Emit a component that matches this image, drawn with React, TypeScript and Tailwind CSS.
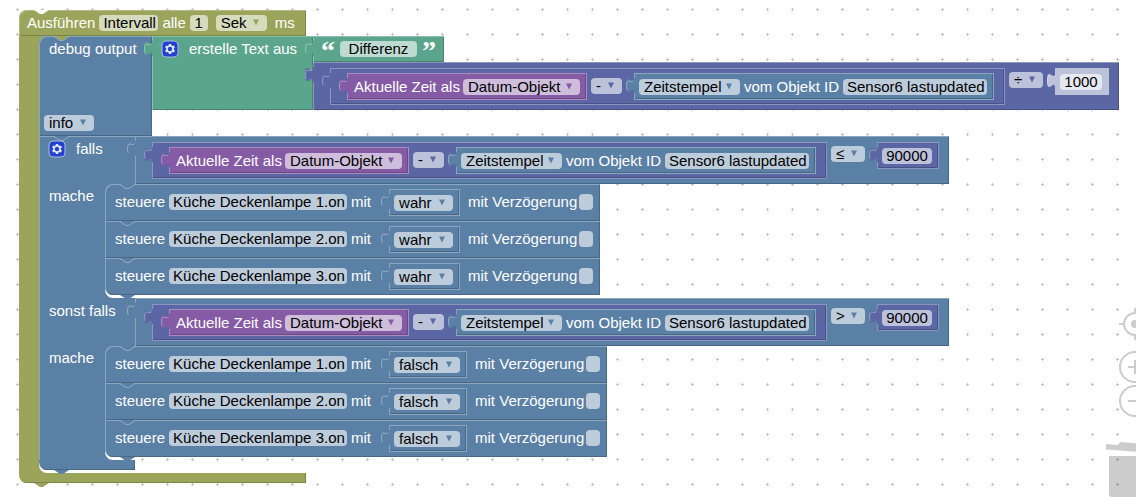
import React from 'react';
import { clsx } from 'clsx';

type Tone = 'olive' | 'blue' | 'green' | 'indigo' | 'purple' | 'shadow';

const tones: Record<Tone, { bg: string; ink: string; edge: string; ring: string }> = {
  olive: {
    bg: 'bg-[#9aa55b]',
    ink: 'text-[#9aa55b]',
    edge: 'shadow-[inset_1px_1px_0_#b4bc84,inset_-1px_-1px_0_#7b8449]',
    ring: '',
  },
  blue: {
    bg: 'bg-[#5b80a5]',
    ink: 'text-[#5b80a5]',
    edge: 'shadow-[inset_1px_1px_0_#8ca6c0,inset_-1px_-1px_0_#496684]',
    ring: 'shadow-[inset_0_0_0_1px_#8ca6c0,inset_-2px_-2px_0_#496684]',
  },
  green: {
    bg: 'bg-[#5ba58c]',
    ink: 'text-[#5ba58c]',
    edge: 'shadow-[inset_1px_1px_0_#8cc0ae,inset_-1px_-1px_0_#498470]',
    ring: '',
  },
  indigo: {
    bg: 'bg-[#5b67a5]',
    ink: 'text-[#5b67a5]',
    edge: 'shadow-[inset_1px_1px_0_#8c95c0,inset_-1px_-1px_0_#495284]',
    ring: 'shadow-[inset_0_0_0_1px_#8c95c0,inset_-2px_-2px_0_#495284]',
  },
  purple: {
    bg: 'bg-[#855ba5]',
    ink: 'text-[#855ba5]',
    edge: '',
    ring: 'shadow-[inset_0_0_0_1px_#a98cc0,inset_-2px_-2px_0_#6a4984]',
  },
  shadow: {
    bg: 'bg-[#bdc2db]',
    ink: 'text-[#bdc2db]',
    edge: '',
    ring: '',
  },
};

// Puzzle tab on the left side of a value block
const Plug = ({ tone }: { tone: Tone }) => (
  <svg
    className={clsx('absolute top-[5px] -left-2 overflow-visible', tones[tone].ink)}
    width="9"
    height="15"
    viewBox="0 0 9 15"
    aria-hidden="true"
  >
    <path d="M9 0H8c0 10-8-8-8 7.5S8 5 8 15h1z" fill="currentColor" />
    <path d="M7.5 2.5C6 6 .5-1 .5 7.5c0 3 .5 4 1 4.500" fill="none" stroke="#fff" strokeOpacity="0.35" />
  </svg>
);

const Notch = ({ className, line = true }: { className: string; line?: boolean }) => (
  <svg
    className={clsx('absolute left-[15px] z-10', className)}
    width="15"
    height="5"
    viewBox="0 0 15 5"
    aria-hidden="true"
  >
    <path d="M0 0l6 4h3l6-4z" fill="currentColor" />
    {line && <path d="M0 .5l6 4h3l6-4" fill="none" stroke="#fff" strokeOpacity="0.35" />}
  </svg>
);

const Gear = () => (
  <button type="button" aria-label="Mutator" className="block size-4 shrink-0">
    <svg width="16" height="16" viewBox="0 0 16 16" className="overflow-visible">
      <rect width="16" height="16" rx="4" fill="#2340d0" stroke="#a9bddb" />
      <path
        fill="#dfe6f5"
        d="m4.203,7.296 0,1.368 -0.92,0.677 -0.11,0.41 0.9,1.559 0.41,0.11 1.043,-0.457 1.187,0.683 0.127,1.134 0.3,0.3 1.8,0 0.3,-0.299 0.127,-1.138 1.185,-0.682 1.046,0.458 0.409,-0.11 0.9,-1.559 -0.11,-0.41 -0.92,-0.677 0,-1.366 0.92,-0.677 0.11,-0.41 -0.9,-1.559 -0.409,-0.109 -1.046,0.458 -1.185,-0.682 -0.127,-1.138 -0.3,-0.299 -1.8,0 -0.3,0.3 -0.126,1.135 -1.187,0.682 -1.043,-0.457 -0.41,0.11 -0.899,1.559 0.108,0.409z"
      />
      <circle cx="8" cy="8" r="2.2" fill="#2340d0" />
    </svg>
  </button>
);

const Label = ({ children }: { children: React.ReactNode }) => (
  <span className="whitespace-nowrap text-white">{children}</span>
);

const Field = ({ value, label, width, className }: { value: string; label: string; width: string; className?: string }) => (
  <input
    type="text"
    aria-label={label}
    defaultValue={value}
    className={clsx('h-4 shrink-0 rounded bg-white/60 text-black outline-none', width, className ?? 'pl-1')}
  />
);

const Dropdown = ({ options, label, width, tone }: { options: string[]; label: string; width: string; tone: Tone }) => (
  <span className={clsx('relative block h-4 shrink-0', width)}>
    <select
      aria-label={label}
      className="block h-4 w-full appearance-none rounded bg-white/60 pl-[5px] text-black outline-none"
    >
      {options.map((o) => (
        <option key={o}>{o}</option>
      ))}
    </select>
    <svg
      className={clsx('pointer-events-none absolute top-1 right-2', tones[tone].ink)}
      width="6"
      height="7"
      viewBox="0 0 6 7"
      aria-hidden="true"
    >
      <path d="M0 .5h6L3 6.500z" fill="currentColor" />
    </svg>
  </span>
);

// Small value block sitting inside a parent row
const Inset = ({ tone, className, children }: { tone: Tone; className?: string; children: React.ReactNode }) => (
  <div
    className={clsx('relative flex h-[27px] shrink-0 items-start pt-1.5', tones[tone].bg, tones[tone].ring, className)}
  >
    <Plug tone={tone} />
    {children}
  </div>
);

const TimeDifference = () => (
  <div
    className={clsx(
      'relative flex h-[37px] w-[675px] shrink-0 items-start gap-1 pt-[5px] pl-[17px]',
      tones.indigo.bg,
      tones.indigo.ring
    )}
  >
    <Plug tone="indigo" />
    <Inset tone="purple" className="w-60 justify-between pr-[7px] pl-[7px]">
      <Label>Aktuelle Zeit als</Label>
      <Dropdown tone="purple" label="Zeitformat" width="w-[117px]" options={['Datum-Objekt', 'Millisekunden']} />
    </Inset>
    <div className="pt-[5px]">
      <Dropdown tone="indigo" label="Rechenart" width="w-[31px]" options={['-', '+', '×', '÷']} />
    </div>
    <Inset tone="blue" className="ml-2 w-[360px] justify-between pr-[7px] pl-[5px]">
      <Dropdown tone="blue" label="Attribut" width="w-[101px]" options={['Zeitstempel', 'Wert']} />
      <Label>vom Objekt ID</Label>
      <Field label="Objekt ID" value="Sensor6 lastupdated" width="w-36" />
    </Inset>
  </div>
);

interface CalculationProps {
  tone: Tone;
  operators: string[];
  numberTone: Tone;
  value: string;
  fieldWidth: string;
}

const Calculation = ({ tone, operators, numberTone, value, fieldWidth }: CalculationProps) => (
  <div className={clsx('relative flex h-12 shrink-0 items-start gap-1 pt-1.5 pr-2.5 pl-[17px]', tones[tone].bg, tones[tone].edge)}>
    <Plug tone={tone} />
    <TimeDifference />
    <div className="pt-1">
      <Dropdown tone={tone} label="Operator" width="w-[34px]" options={operators} />
    </div>
    <Inset tone={numberTone} className="ml-2 pr-[7px] pl-[5px]">
      <Field label="Zahl" value={value} width={fieldWidth} className="text-center" />
    </Inset>
  </div>
);

const Control = ({ target, state, last }: { target: string; state: 'wahr' | 'falsch'; last: boolean }) => (
  <div
    className={clsx(
      'relative flex h-[37px] items-start gap-1 pt-[5px] pr-[7px] pl-2.5 first-of-type:rounded-tl-lg',
      tones.blue.bg,
      tones.blue.edge,
      last && 'rounded-bl-lg'
    )}
  >
    <Notch className="top-0 text-[#5b80a5]" />
    <div className="flex gap-1 pt-[5px]">
      <Label>steuere</Label>
      <Field label="Objekt" value={target} width="w-[178px]" />
      <Label>mit</Label>
    </div>
    <Inset tone="blue" className="ml-3.5 pr-[7px] pl-[5px]">
      <Dropdown
        tone="blue"
        label="Zustand"
        width={state === 'wahr' ? 'w-[59px]' : 'w-[66px]'}
        options={state === 'wahr' ? ['wahr', 'falsch'] : ['falsch', 'wahr']}
      />
    </Inset>
    <label className="ml-1 flex gap-0.5 pt-[5px]">
      <Label>mit Verzögerung</Label>
      <input type="checkbox" className="h-4 w-3.5 appearance-none rounded bg-white/60" />
    </label>
    {last && <Notch line={false} className="top-full text-[#5b80a5]" />}
  </div>
);

const lamps = ['Küche Deckenlampe 1.on', 'Küche Deckenlampe 2.on', 'Küche Deckenlampe 3.on'];

const Branch = ({ state }: { state: 'wahr' | 'falsch' }) => (
  <div className="flex">
    <div className="w-[74px] bg-[#5b80a5] pt-1 pl-2.5 shadow-[inset_1px_0_0_#8ca6c0]">
      <Label>mache</Label>
    </div>
    <div className="relative -ml-2 pb-[3px]">
      <span className="absolute bottom-0 left-0 h-3 w-8 rounded-bl-lg bg-white" />
      <div>
        {lamps.map((lamp, i) => (
          <Control key={lamp} target={lamp} state={state} last={i === lamps.length - 1} />
        ))}
      </div>
    </div>
  </div>
);

const DebugBlock = () => (
  <div className="relative flex items-start">
    <Notch className="top-0 text-[#9aa55b]" />
    <div className={clsx('flex h-[100px] w-[113px] flex-col justify-between rounded-tl-lg py-[5px]', tones.blue.bg, tones.blue.edge)}>
      <div className="pl-2.5">
        <Label>debug output</Label>
      </div>
      <div className="pl-[5px]">
        <Dropdown tone="blue" label="Stufe" width="w-[50px]" options={['info', 'debug', 'warn', 'error']} />
      </div>
    </div>
    <div className="relative flex">
      <Plug tone="green" />
      <div className={clsx('flex w-[161px] items-start gap-[11px] pt-[5px] pl-2.5', tones.green.bg, tones.green.edge)}>
        <Gear />
        <Label>erstelle Text aus</Label>
      </div>
      <div className="flex flex-col items-start">
        <div className={clsx('relative flex h-[26px] items-start gap-[5px] px-2 pt-[5px]', tones.green.bg, tones.green.edge)}>
          <Plug tone="green" />
          <span className="h-4 font-['Liberation_Serif',serif] text-[28px] leading-5 font-bold text-white">“</span>
          <Field label="Text" value="Differenz" width="w-[77px]" className="text-center" />
          <span className="h-4 font-['Liberation_Serif',serif] text-[28px] leading-5 font-bold text-white">”</span>
        </div>
        <Calculation tone="indigo" operators={['÷', '×', '+', '-']} numberTone="shadow" value="1000" fieldWidth="w-[42px]" />
      </div>
    </div>
  </div>
);

const IfBlock = () => (
  <div className="relative">
    <Notch className="top-0 text-[#5b80a5]" />
    <div className="flex">
      <div className="flex w-24 items-start gap-[11px] bg-[#5b80a5] pt-[5px] pl-2.5 shadow-[inset_1px_1px_0_#8ca6c0]">
        <Gear />
        <Label>falls</Label>
      </div>
      <Calculation tone="blue" operators={['≤', '<', '=', '>']} numberTone="indigo" value="90000" fieldWidth="w-[50px]" />
    </div>
    <Branch state="wahr" />
    <div className="flex">
      <div className="w-24 bg-[#5b80a5] pt-[5px] pl-2.5 shadow-[inset_1px_0_0_#8ca6c0]">
        <Label>sonst falls</Label>
      </div>
      <Calculation tone="blue" operators={['>', '≥', '=', '<']} numberTone="indigo" value="90000" fieldWidth="w-[50px]" />
    </div>
    <Branch state="falsch" />
    <div className="relative h-2.5 w-24 rounded-bl-lg bg-[#5b80a5] shadow-[inset_-1px_-1px_0_#496684]">
      <Notch line={false} className="top-full text-[#5b80a5]" />
    </div>
  </div>
);

const IntervalBlock = () => (
  <div className="relative w-max">
    <Notch className="top-0 text-white" line={false} />
    <div className={clsx('flex h-[26px] w-[287px] items-start gap-1 rounded-tl-lg pt-[5px] pl-2', tones.olive.bg, tones.olive.edge)}>
      <Label>Ausführen</Label>
      <Field label="Name" value="Intervall" width="w-[59px]" />
      <Label>alle</Label>
      <Field label="Anzahl" value="1" width="w-[18px]" className="text-center" />
      <div className="px-1">
        <Dropdown tone="olive" label="Einheit" width="w-[51px]" options={['Sek', 'ms', 'Min']} />
      </div>
      <Label>ms</Label>
    </div>
    <div className="flex">
      <div className="w-7 bg-[#9aa55b]" />
      <div className="relative -ml-2 pb-[3px]">
        <span className="absolute bottom-0 left-0 h-3 w-8 rounded-bl-lg bg-white" />
        <DebugBlock />
        <IfBlock />
      </div>
    </div>
    <div className="relative h-2.5 w-[287px] rounded-bl-lg bg-[#9aa55b] shadow-[inset_-1px_-1px_0_#7b8449]">
      <Notch line={false} className="top-full text-[#9aa55b]" />
    </div>
  </div>
);

const CanvasControls = () => (
  <div className="absolute -right-[17px] bottom-0 flex w-[47px] flex-col items-end text-[#ccc]">
    <button type="button" aria-label="Zentrieren" className="mr-0.5 mb-[11px] block size-8">
      <svg width="32" height="32" viewBox="0 0 32 32" fill="none" stroke="currentColor" strokeWidth="2">
        <circle cx="16" cy="16" r="11" />
        <circle cx="16" cy="16" r="4" fill="currentColor" stroke="none" />
        <path d="M0 16h5M27 16h5M16 0v5M16 27v5" />
      </svg>
    </button>
    <button type="button" aria-label="Vergrößern" className="mr-0.5 mb-0.5 block size-8">
      <svg width="32" height="32" viewBox="0 0 32 32" fill="none" stroke="currentColor" strokeWidth="2">
        <circle cx="16" cy="16" r="15" />
        <path d="M9 16h14M16 9v14" />
      </svg>
    </button>
    <button type="button" aria-label="Verkleinern" className="mr-0.5 mb-[25px] block size-8">
      <svg width="32" height="32" viewBox="0 0 32 32" fill="none" stroke="currentColor" strokeWidth="2">
        <circle cx="16" cy="16" r="15" />
        <path d="M9 16h14" />
      </svg>
    </button>
    <button type="button" aria-label="Papierkorb" className="block">
      <svg width="47" height="55" viewBox="0 0 47 55" fill="#000" fillOpacity="0.2">
        <path d="M0 2l12 1 2-3 18 1.500 2 3 13 1v5.500L0 7.500z" />
        <path d="M3 14h41v38q0 3-3 3H6q-3 0-3-3z" />
      </svg>
    </button>
  </div>
);

const App = () => {
  return (
    <main className="relative min-h-screen overflow-hidden bg-white pt-2.5 pb-3 pl-[19px] font-['Liberation_Sans',Arial,sans-serif] text-[15px] leading-4">
      <svg className="absolute inset-0 size-full" aria-hidden="true">
        <defs>
          <pattern id="grid" x="5" y="-3" width="25" height="25" patternUnits="userSpaceOnUse">
            <path d="M11 12.500h3M12.500 11v3" stroke="#c4c4c4" />
          </pattern>
        </defs>
        <rect width="100%" height="100%" fill="url(#grid)" />
      </svg>
      <IntervalBlock />
      <CanvasControls />
    </main>
  );
};

export default App;
